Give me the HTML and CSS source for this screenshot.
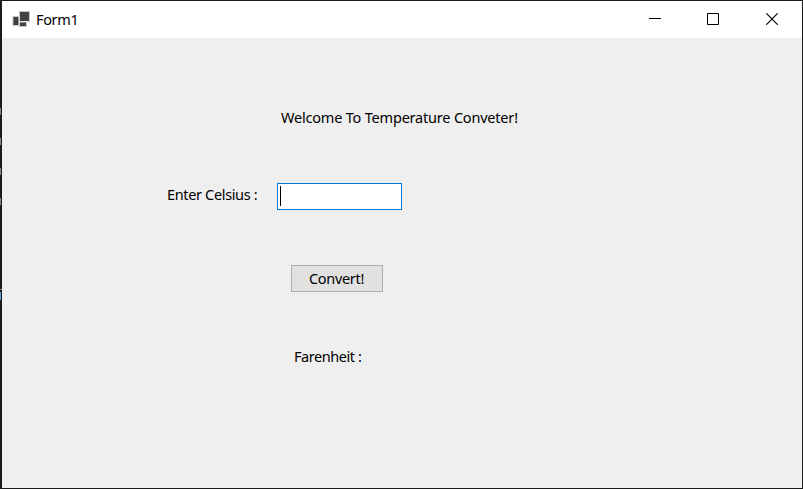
FILE: index.html
```html
<!DOCTYPE html>
<html lang="en">
<head>
<meta charset="utf-8">
<title>Form1</title>
<link rel="stylesheet" href="styles.css">
</head>
<body>
<div class="desktop">
<main class="window">
  <header class="titlebar">
    <svg class="app-icon" width="18" height="17" viewBox="0 0 18 17">
      <path fill="#c9c9c9" d="M7 0h11v11h-3v5H7v-1H0.500V5H7z"/>
      <path fill="#eee" d="M6.500 5h1v10h-1zM7 10.200h9v1H7z"/>
      <path fill="#424242" d="M8 1h9v9H8zM1.400 6H6.400v8H1.400zM8 11.500h6v3.500H8z"/>
    </svg>
    <span class="title">Form1</span>
    <nav class="controls">
      <svg class="minimize" width="12" height="12" viewBox="0 0 12 12"><path d="M0 5.500h12"/></svg>
      <svg width="12" height="12" viewBox="0 0 12 12"><path d="M.5.5h11v11H.5z"/></svg>
      <svg class="close" width="12" height="12" viewBox="0 0 12 12"><path d="M.3.3l11.400 11.400M11.700.3L.3 11.700"/></svg>
    </nav>
  </header>
  <form class="form">
    <p class="welcome">Welcome To Temperature Conveter!</p>
    <div class="field">
      <label class="celsius">Enter Celsius :</label>
      <div class="textbox"><span class="caret"></span></div>
    </div>
    <button class="convert" type="button">Convert!</button>
    <p class="result">Farenheit :</p>
  </form>
</main>
</div>
</body>
</html>
```

FILE: styles.css
```css
* { box-sizing: border-box; }
body {
  margin: 0;
  font: 14.5px/20px "Noto Sans", sans-serif;
  color: #000;
}
.desktop {
  width: 803px;
  height: 489px;
  padding: 1px 1px 1px 2px;
  background:
    linear-gradient(#7b8990, #7b8990) 0 108px / 1px 7px no-repeat,
    linear-gradient(#7b8990, #7b8990) 0 138px / 1px 7px no-repeat,
    linear-gradient(#7b8990, #7b8990) 0 168px / 1px 7px no-repeat,
    linear-gradient(#7b8990, #7b8990) 0 198px / 1px 7px no-repeat,
    linear-gradient(#7b8388, #7b8388) 0 289px / 2px 1px no-repeat,
    linear-gradient(#5b9bd5, #5b9bd5) 0 292px / 1px 8px no-repeat,
    #1b1b1d;
}
.window { height: 487px; background: #efefef; }
.titlebar {
  display: flex;
  height: 37px;
  padding: 0 24px 0 10px;
  background: #fff;
}
.app-icon { margin: 10px 0 0 0; }
.title { margin: 8px 0 0 6px; letter-spacing: -0.35px; }
.controls { display: flex; gap: 47px; margin: 12px 0 0 auto; }
.controls svg { fill: none; stroke: #000; stroke-width: 1; }
.controls .minimize { margin-right: -1px; }
.controls .close { stroke-width: 1.15; }
.form { display: flex; flex-direction: column; align-items: flex-start; }
.welcome { margin: 69px 0 0 279px; letter-spacing: -0.2px; white-space: nowrap; }
.field { display: flex; margin: 56px 0 0 165px; }
.celsius { width: 110px; padding-top: 1px; letter-spacing: -0.35px; white-space: nowrap; }
.textbox {
  width: 125px;
  height: 27px;
  padding: 2px;
  border: 1px solid #0078d7;
  background: #fff;
}
.caret { display: block; width: 1px; height: 20px; background: #000; }
.convert {
  width: 92px;
  height: 27px;
  margin: 55px 0 0 289px;
  padding: 0 1px 2px 0;
  border: 1px solid #adadad;
  background: #e1e1e1;
  color: #000;
  font: inherit;
  letter-spacing: -0.3px;
}
.result { margin: 54px 0 0 292px; letter-spacing: -0.45px; }
```
